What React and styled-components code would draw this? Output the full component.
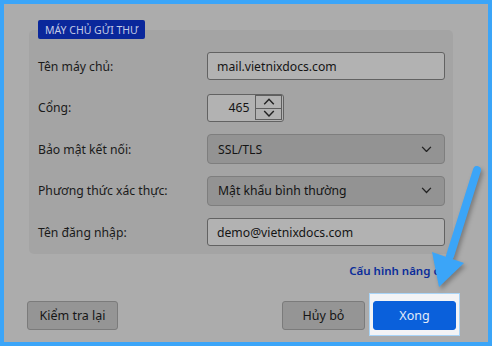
import React from 'react';
import styled, { createGlobalStyle } from 'styled-components';

const Global = createGlobalStyle`
  html, body {
    margin: 0;
    padding: 0;
    background: #acacac;
  }
  body {
    font-family: "Noto Sans", "Open Sans", sans-serif;
  }
`;

const Frame = styled.div`
  position: relative;
  box-sizing: border-box;
  width: 492px;
  height: 346px;
  border: 4px solid #3ba5f8;
  background: #acacac;
  padding: 16px 32px 12px 23px;
  display: flex;
  flex-direction: column;
  overflow: hidden;
`;

const Group = styled.div`
  display: flex;
  flex-direction: column;
  width: 424px;
  margin-left: 2px;
`;

const Badge = styled.div`
  position: relative;
  z-index: 1;
  align-self: flex-start;
  margin-left: 9px;
  margin-bottom: -9px;
  height: 19px;
  padding: 0 7px;
  background: #0a279b;
  border-radius: 2px;
  color: #c3cae6;
  font-size: 10.5px;
  line-height: 20px;
`;

const Panel = styled.div`
  background: #a4a4a4;
  border-radius: 5px;
  padding: 21px 8px 7px 9px;
  display: grid;
  grid-template-columns: 169px 1fr;
  grid-auto-rows: 30px;
  row-gap: 11.5px;
  align-items: center;
`;

const Label = styled.div`
  font-size: 12.2px;
  color: #1a1a1a;
`;

const TextBox = styled.div`
  box-sizing: border-box;
  height: 28px;
  width: ${(p) => (p.$narrow ? '77px' : '100%')};
  background: #b2b2b2;
  border: 1px solid #626262;
  border-radius: 3px;
  padding: 0 9px;
  display: flex;
  align-items: center;
  font-size: 12.2px;
  color: #141414;
`;

const NumberValue = styled.span`
  flex: 1;
  text-align: center;
  padding-left: 6px;
`;

const Spinner = styled.div`
  box-sizing: border-box;
  width: 27px;
  height: 25px;
  margin-right: -8px;
  border: 1px solid #5e5e5e;
  display: grid;
  grid-template-rows: 1fr 1fr;
`;

const SpinHalf = styled.div`
  display: flex;
  align-items: center;
  justify-content: center;
  border-top: ${(p) => (p.$lower ? '1px solid #5e5e5e' : 'none')};
`;

const Select = styled.div`
  box-sizing: border-box;
  height: 30px;
  background: #939393;
  border: 1px solid #7e7e7e;
  border-radius: 4px;
  padding: 0 12px 0 10px;
  display: flex;
  align-items: center;
  justify-content: space-between;
  font-size: 12.2px;
  color: #141414;
`;

const LinkRow = styled.div`
  margin-top: 9px;
  height: 16px;
  text-align: right;
  font-size: 11.5px;
  font-weight: 600;
  line-height: 16px;
  color: #0b2d9a;
`;

const ButtonRow = styled.div`
  margin-top: 22px;
  display: flex;
  align-items: center;
  gap: 8px;
`;

const Button = styled.div`
  position: relative;
  box-sizing: border-box;
  height: 29px;
  width: ${(p) => p.$w}px;
  margin-right: ${(p) => (p.$push ? 'auto' : '0')};
  display: flex;
  align-items: center;
  justify-content: center;
  border-radius: 3px;
  font-size: 12.5px;
  background: ${(p) => (p.$primary ? '#0a60db' : '#959595')};
  border: 1px solid ${(p) => (p.$primary ? '#0a60db' : '#7b7b7b')};
  color: ${(p) => (p.$primary ? '#e4ecf8' : '#161616')};

  ${(p) =>
    p.$primary &&
    `
    &::before {
      content: '';
      position: absolute;
      z-index: -1;
      top: -9px;
      bottom: -7px;
      left: -5px;
      right: -5px;
      background: #f3f4f6;
      border: 1px solid #a9d5f8;
    }
  `}
`;

const PrimaryWrap = styled.div`
  position: relative;
  z-index: 0;
`;

const Arrow = styled.svg`
  position: absolute;
  left: -4px;
  top: -4px;
  width: 492px;
  height: 346px;
  pointer-events: none;
  filter: drop-shadow(2px 3px 2px rgba(0, 0, 0, 0.28));
`;

const Chevron = ({ up, size = 11 }) => (
  <svg width={size} height={size * 0.6} viewBox="0 0 10 6">
    <path
      d={up ? 'M1 5.2 L5 1 L9 5.2' : 'M1 0.8 L5 5 L9 0.8'}
      fill="none"
      stroke="#222"
      strokeWidth="1.2"
    />
  </svg>
);

export default function App() {
  return (
    <>
      <Global />
      <Frame>
        <Group>
          <Badge>MÁY CHỦ GỬI THƯ</Badge>
          <Panel>
            <Label>Tên máy chủ:</Label>
            <TextBox>mail.vietnixdocs.com</TextBox>

            <Label>Cổng:</Label>
            <TextBox $narrow>
              <NumberValue>465</NumberValue>
              <Spinner>
                <SpinHalf>
                  <Chevron up size={12} />
                </SpinHalf>
                <SpinHalf $lower>
                  <Chevron size={12} />
                </SpinHalf>
              </Spinner>
            </TextBox>

            <Label>Bảo mật kết nối:</Label>
            <Select>
              SSL/TLS
              <Chevron />
            </Select>

            <Label>Phương thức xác thực:</Label>
            <Select>
              Mật khẩu bình thường
              <Chevron />
            </Select>

            <Label>Tên đăng nhập:</Label>
            <TextBox>demo@vietnixdocs.com</TextBox>
          </Panel>
          <LinkRow>Cấu hình nâng cao</LinkRow>
        </Group>

        <ButtonRow>
          <Button $w={91} $push>
            Kiểm tra lại
          </Button>
          <Button $w={83}>Hủy bỏ</Button>
          <PrimaryWrap>
            <Button $w={83} $primary>
              Xong
            </Button>
          </PrimaryWrap>
        </ButtonRow>

        <Arrow viewBox="0 0 492 346">
          <line
            x1="477"
            y1="170"
            x2="450"
            y2="256"
            stroke="#3ba5f8"
            strokeWidth="8"
            strokeLinecap="round"
          />
          <polygon points="432,252 464,263 439,287" fill="#3ba5f8" />
        </Arrow>
      </Frame>
    </>
  );
}
